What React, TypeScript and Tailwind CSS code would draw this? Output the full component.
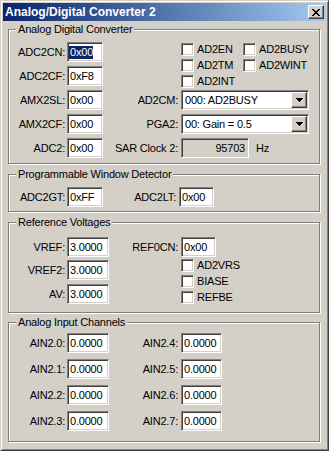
import React from 'react'

// classic 3D bevels
const sunken =
  'border border-t-[#808080] border-l-[#808080] border-b-white border-r-white shadow-[inset_1px_1px_0_#404040,inset_-1px_-1px_0_#d4d0c8]'
const raised =
  'border border-t-white border-l-white border-b-[#404040] border-r-[#404040] shadow-[inset_-1px_-1px_0_#808080]'

function Group({ title, className, children }: { title: string; className: string; children: React.ReactNode }) {
  return (
    <div className={`relative w-[312px] border border-[#808080] shadow-[1px_1px_0_#fff,inset_1px_1px_0_#fff] ${className}`}>
      <span className="absolute left-[7px] top-[-7px] bg-[#d4d0c8] px-[2px] leading-[13px]">{title}</span>
      {children}
    </div>
  )
}

function Edit({ value, className, selected }: { value: string; className: string; selected?: boolean }) {
  return (
    <div className={`h-[20px] shrink-0 bg-white flex items-center pl-[1px] ${sunken} ${className}`}>
      {selected ? <span className="bg-[#0a246a] text-white pl-[1px]">{value}</span> : <span className="pl-[1px]">{value}</span>}
    </div>
  )
}

function Field({
  label,
  labelClass,
  value,
  boxClass,
  selected,
}: {
  label: string
  labelClass: string
  value: string
  boxClass: string
  selected?: boolean
}) {
  return (
    <div className="flex items-center h-[20px]">
      <span className={`text-right shrink-0 ${labelClass}`}>{label}</span>
      <Edit value={value} className={boxClass} selected={selected} />
    </div>
  )
}

function Check({ label }: { label: string }) {
  return (
    <div className="flex items-center h-[16px]">
      <span className={`w-[13px] h-[13px] shrink-0 bg-white ${sunken}`} />
      <span className="ml-[3px]">{label}</span>
    </div>
  )
}

function Arrow() {
  return (
    <svg width="7" height="4" viewBox="0 0 7 4" shapeRendering="crispEdges">
      <path d="M0 0h7v1H0zM1 1h5v1H1zM2 2h3v1H2zM3 3h1v1H3z" fill="#000" />
    </svg>
  )
}

function Combo({ value }: { value: string }) {
  return (
    <div className={`h-[20px] w-[128px] bg-white flex items-center p-[1px] ${sunken}`}>
      <span className="flex-1 pl-[2px]">{value}</span>
      <span className={`w-[16px] h-[16px] bg-[#d4d0c8] flex items-center justify-center ${raised}`}>
        <Arrow />
      </span>
    </div>
  )
}

export default function App() {
  return (
    <div className="w-[329px] h-[451px] bg-[#d4d0c8] p-[2px] border border-t-[#d4d0c8] border-l-[#d4d0c8] border-b-[#404040] border-r-[#404040] shadow-[inset_1px_1px_0_#fff,inset_-1px_-1px_0_#808080] font-['Liberation_Sans',Arial,sans-serif] text-[11px] leading-[13px] tracking-[-0.2px] text-black">
      {/* Title bar */}
      <div className="h-[18px] flex items-center justify-between pl-[2px] pr-[2px] bg-linear-to-r from-[#0a246a] to-[#a6caf0]">
        <span className="text-white font-bold text-[12px] tracking-normal">Analog/Digital Converter 2</span>
        <span className={`w-[16px] h-[14px] bg-[#d4d0c8] flex items-center justify-center ${raised}`}>
          <svg width="8" height="7" viewBox="0 0 8 7" shapeRendering="crispEdges">
            <path
              d="M0 0h2v1H0zM6 0h2v1H6zM1 1h2v1H1zM5 1h2v1H5zM2 2h4v1H2zM3 3h2v1H3zM2 4h4v1H2zM1 5h2v1H1zM5 5h2v1H5zM0 6h2v1H0zM6 6h2v1H6z"
              fill="#000"
            />
          </svg>
        </span>
      </div>

      <div className="pl-[5px]">
        {/* Analog Digital Converter */}
        <Group title="Analog Digital Converter" className="mt-[8px] h-[135px] flex">
          <div className="w-[96px] shrink-0 pt-[12px] flex flex-col gap-[4px]">
            <Field label="ADC2CN:" labelClass="w-[58px] pr-[2px]" value="0x00" boxClass="w-[36px]" selected />
            <Field label="ADC2CF:" labelClass="w-[58px] pr-[2px]" value="0xF8" boxClass="w-[36px]" />
            <Field label="AMX2SL:" labelClass="w-[58px] pr-[2px]" value="0x00" boxClass="w-[36px]" />
            <Field label="AMX2CF:" labelClass="w-[58px] pr-[2px]" value="0x00" boxClass="w-[36px]" />
            <Field label="ADC2:" labelClass="w-[58px] pr-[2px]" value="0x00" boxClass="w-[36px]" />
          </div>
          <div className="pt-[11px] flex flex-col">
            <div className="ml-[76px] grid grid-cols-[62px_auto]">
              <Check label="AD2EN" />
              <Check label="AD2BUSY" />
              <Check label="AD2TM" />
              <Check label="AD2WINT" />
              <Check label="AD2INT" />
            </div>
            <div className="mt-[1px] flex flex-col gap-[4px]">
              <div className="flex items-center h-[20px]">
                <span className="w-[76px] pr-[3px] text-right">AD2CM:</span>
                <Combo value="000: AD2BUSY" />
              </div>
              <div className="flex items-center h-[20px]">
                <span className="w-[76px] pr-[3px] text-right">PGA2:</span>
                <Combo value="00: Gain = 0.5" />
              </div>
              <div className="flex items-center h-[20px]">
                <span className="w-[76px] pr-[3px] text-right">SAR Clock 2:</span>
                <div className={`h-[20px] w-[68px] flex items-center justify-end pr-[3px] ${sunken}`}>95703</div>
                <span className="ml-[7px]">Hz</span>
              </div>
            </div>
          </div>
        </Group>

        {/* Programmable Window Detector */}
        <Group title="Programmable Window Detector" className="mt-[10px] h-[38px] pt-[12px]">
          <div className="flex items-center">
            <Field label="ADC2GT:" labelClass="w-[58px] pr-[2px]" value="0xFF" boxClass="w-[36px]" />
            <Field label="ADC2LT:" labelClass="w-[76px] pr-[3px]" value="0x00" boxClass="w-[35px]" />
          </div>
        </Group>

        {/* Reference Voltages */}
        <Group title="Reference Voltages" className="mt-[10px] h-[91px] flex">
          <div className="w-[102px] shrink-0 pt-[14px] flex flex-col">
            <Field label="VREF:" labelClass="w-[58px] pr-[2px]" value="3.0000" boxClass="w-[42px]" />
            <div className="mt-[3px]">
              <Field label="VREF2:" labelClass="w-[58px] pr-[2px]" value="3.0000" boxClass="w-[42px]" />
            </div>
            <div className="mt-[4px]">
              <Field label="AV:" labelClass="w-[58px] pr-[2px]" value="3.0000" boxClass="w-[42px]" />
            </div>
          </div>
          <div className="pt-[14px] flex flex-col">
            <Field label="REF0CN:" labelClass="w-[70px] pr-[3px]" value="0x00" boxClass="w-[35px]" />
            <div className="ml-[70px] flex flex-col">
              <Check label="AD2VRS" />
              <Check label="BIASE" />
              <Check label="REFBE" />
            </div>
          </div>
        </Group>

        {/* Analog Input Channels */}
        <Group title="Analog Input Channels" className="mt-[9px] h-[120px] flex">
          <div className="w-[102px] shrink-0 pt-[10px] flex flex-col gap-[6px]">
            <Field label="AIN2.0:" labelClass="w-[58px] pr-[2px]" value="0.0000" boxClass="w-[42px]" />
            <Field label="AIN2.1:" labelClass="w-[58px] pr-[2px]" value="0.0000" boxClass="w-[42px]" />
            <Field label="AIN2.2:" labelClass="w-[58px] pr-[2px]" value="0.0000" boxClass="w-[42px]" />
            <Field label="AIN2.3:" labelClass="w-[58px] pr-[2px]" value="0.0000" boxClass="w-[42px]" />
          </div>
          <div className="pt-[10px] flex flex-col gap-[6px]">
            <Field label="AIN2.4:" labelClass="w-[70px] pr-[3px]" value="0.0000" boxClass="w-[41px]" />
            <Field label="AIN2.5:" labelClass="w-[70px] pr-[3px]" value="0.0000" boxClass="w-[41px]" />
            <Field label="AIN2.6:" labelClass="w-[70px] pr-[3px]" value="0.0000" boxClass="w-[41px]" />
            <Field label="AIN2.7:" labelClass="w-[70px] pr-[3px]" value="0.0000" boxClass="w-[41px]" />
          </div>
        </Group>
      </div>
    </div>
  )
}
